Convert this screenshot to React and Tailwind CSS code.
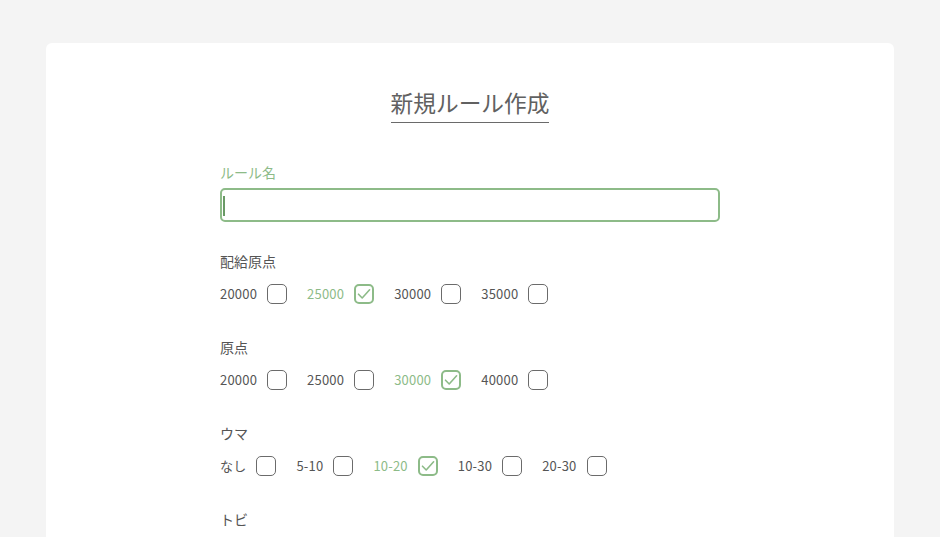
const sections = [
  { label: '配給原点', options: ['20000', '25000', '30000', '35000'], selected: '25000' },
  { label: '原点', options: ['20000', '25000', '30000', '40000'], selected: '30000' },
  { label: 'ウマ', options: ['なし', '5-10', '10-20', '10-30', '20-30'], selected: '10-20' },
  { label: 'トビ', options: [], selected: null },
];

function Check({ checked }) {
  if (checked) {
    return (
      <span className="flex h-5 w-5 items-center justify-center rounded-[5px] border-2 border-[#8dbb88]">
        <svg width="14" height="14" viewBox="0 0 14 14" fill="none">
          <path d="M1.5 7.2 L5.2 11 L12.6 2.8" stroke="#8dbb88" strokeWidth="1.6" strokeLinecap="round" strokeLinejoin="round" />
        </svg>
      </span>
    );
  }
  return <span className="h-5 w-5 rounded-[5px] border-[1.5px] border-[#6b6b6b]" />;
}

export default function App() {
  return (
    <div className="min-h-screen bg-[#f4f4f4] px-[46px] pt-[43px]" style={{ fontFamily: '"Noto Sans CJK JP", "Noto Sans", sans-serif' }}>
      <div className="h-[494px] overflow-hidden rounded-t-[6px] bg-white pt-[45px]">
        <div className="flex justify-center">
          <h1 className="border-b border-[#6a6a6a] pb-[4px] text-[22.7px] leading-[30px] text-[#616161]">新規ルール作成</h1>
        </div>

        <div className="mx-auto mt-[39px] w-[500px]">
          <p className="text-[14px] leading-5 text-[#8dbb88]">ルール名</p>
          <div className="relative mt-[6px] h-[34px] rounded-[5px] border-2 border-[#8dbb88]">
            <span className="absolute left-[1px] top-[6px] h-[20px] w-[1.5px] bg-[#6a9a66]" />
          </div>

          <div className="mt-[29px] flex flex-col gap-[33px]">
            {sections.map((s) => (
              <div key={s.label}>
                <p className="text-[14px] leading-5 text-[#555]">{s.label}</p>
                {s.options.length > 0 && (
                  <div className="mt-[13px] flex items-center gap-5">
                    {s.options.map((o) => {
                      const on = o === s.selected;
                      return (
                        <label key={o} className="flex items-center gap-[10px]">
                          <span className={`text-[13px] leading-5 tracking-[0.2px] ${on ? 'text-[#8dbb88]' : 'text-[#555]'}`}>{o}</span>
                          <Check checked={on} />
                        </label>
                      );
                    })}
                  </div>
                )}
              </div>
            ))}
          </div>
        </div>
      </div>
    </div>
  );
}
